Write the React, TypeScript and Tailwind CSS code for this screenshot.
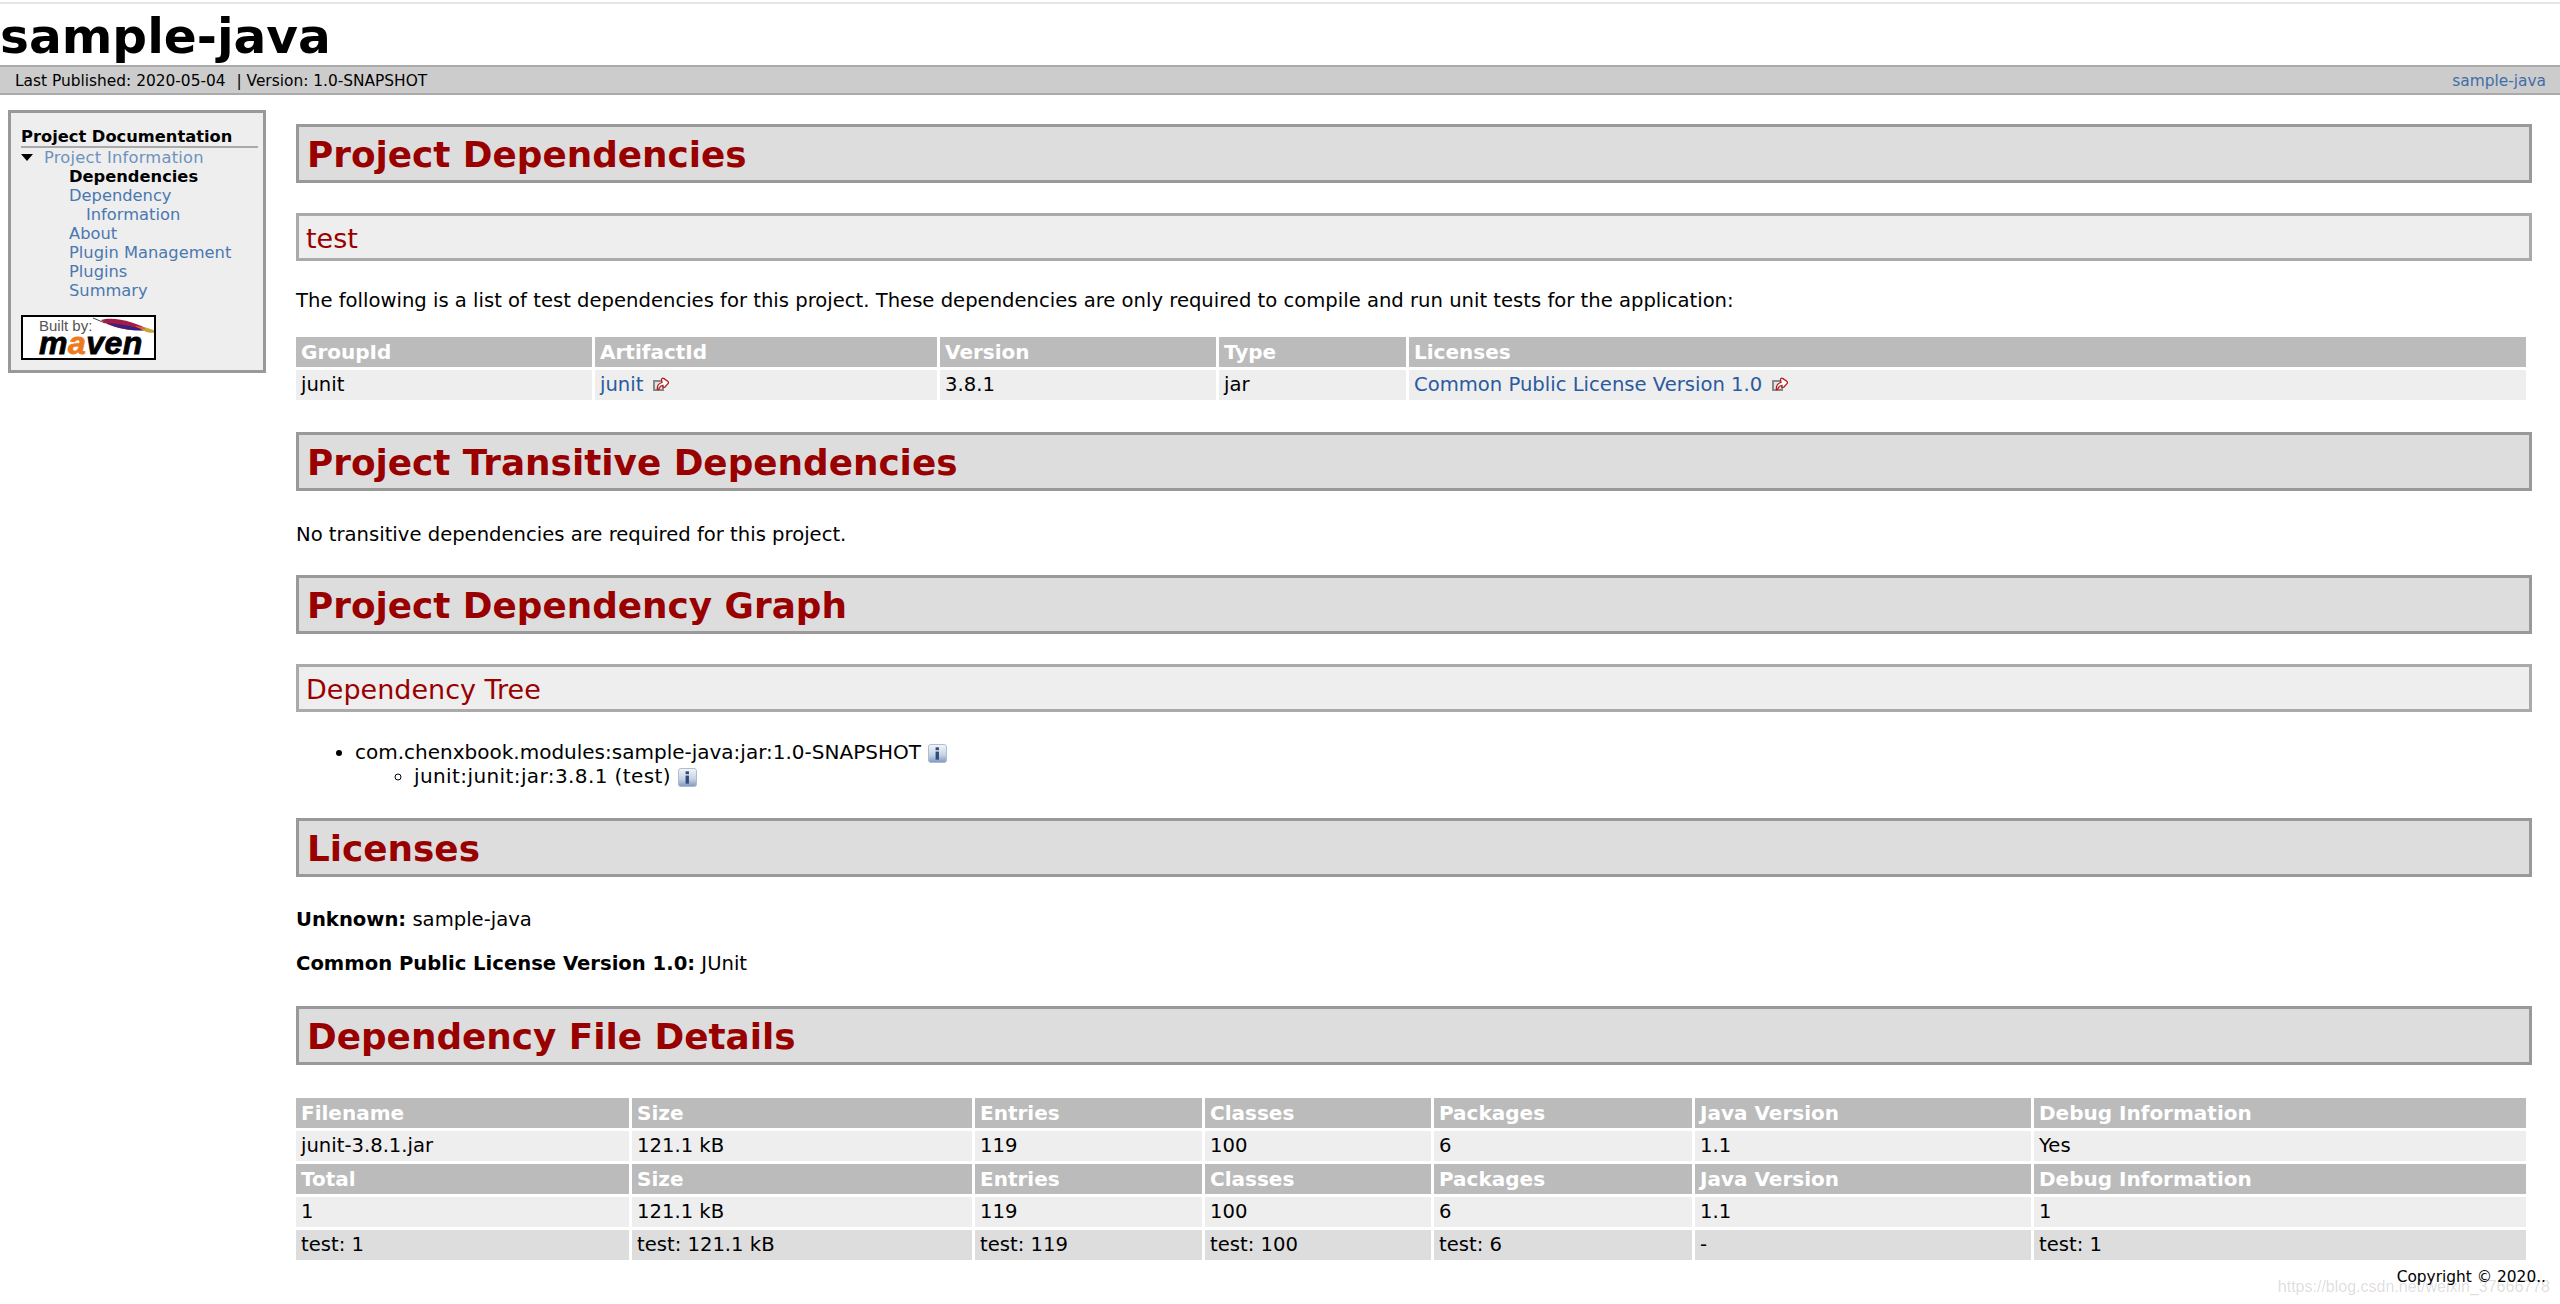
import type { ReactNode } from "react";

const sans = "font-['DejaVu_Sans','Liberation_Sans',sans-serif]";

function ExternalIcon() {
  return (
    <svg width="16" height="14" viewBox="0 0 16 14" className="ml-[10px] inline-block align-[0px]">
      <rect x="1" y="4" width="9" height="9" fill="#e4e4e4" stroke="#888" strokeWidth="2" />
      <path d="M4.5 12.5 C4 9 5.5 6.5 9 5.5 L8.5 2.5 C8.5 1.2 10 1 11 1.6 L15 4.5 C15.6 5 15.6 6 15 6.6 L12 10 C11 10.8 10 10.4 10 9.4 L10 8.4 C8 8.6 6.5 10 5.5 12.5 Z" fill="#fff" stroke="#b41c1c" strokeWidth="1.3" />
    </svg>
  );
}

function InfoIcon() {
  return (
    <svg width="19" height="19" viewBox="0 0 20 20" className="ml-[7px] inline-block align-[-4px]">
      <defs>
        <linearGradient id="info-bg" x1="0" y1="0" x2="0" y2="1">
          <stop offset="0" stopColor="#f4f6fa" />
          <stop offset="0.6" stopColor="#c5d1e3" />
          <stop offset="1" stopColor="#7d98bf" />
        </linearGradient>
      </defs>
      <rect x="0.5" y="0.5" width="19" height="19" rx="2.5" fill="url(#info-bg)" stroke="#a9b9d0" />
      <rect x="8" y="3.5" width="3.5" height="3" fill="#2d4a7c" />
      <rect x="8" y="8" width="3.5" height="8.5" fill="#2d4a7c" />
    </svg>
  );
}

function MavenBadge() {
  return (
    <div className="relative mt-[15px] h-[45px] w-[135px] overflow-hidden border-2 border-black bg-white">
      <span className="absolute left-[16px] top-[0px] font-['Liberation_Sans',sans-serif] text-[15px] leading-[18px] text-[#555]">
        Built by:
      </span>
      <svg width="66" height="20" viewBox="0 0 66 20" className="absolute left-[70px] top-[0px]">
        <path d="M0 1 L12 6" stroke="#444" strokeWidth="1" />
        <path d="M8 3 C22 -1 44 6 56 13 C40 14 18 12 8 3 Z" fill="#a01a4a" />
        <path d="M14 6 C28 7 42 10 54 13 C42 15 26 12 14 6 Z" fill="#3b1f7a" />
        <path d="M46 10 C52 10 60 12 64 15 C58 17 50 15 46 10 Z" fill="#c9a63a" />
        <path d="M42 9 C46 9 50 10 53 12 C49 13 45 11 42 9 Z" fill="#e0622a" />
      </svg>
      <span className="absolute left-[16px] top-[13px] font-['Liberation_Sans',sans-serif] text-[32px] font-bold italic leading-[26px] tracking-[0.5px] text-black [-webkit-text-stroke-width:0.8px]">
        m<span className="text-[#ee7a1e]">a</span>ven
      </span>
    </div>
  );
}

function Sidebar() {
  const item = "block pl-[48px] text-[#4a78b0]";
  return (
    <aside className="ml-[8px] mt-[15px] h-[263px] w-[258px] shrink-0 border-[3px] border-[#999] bg-[#eee] pl-[10px] pr-[5px] pt-[14px] text-[16.3px] leading-[19px]">
      <h5 className="border-b-2 border-[#aaa] pb-0 text-[16.3px] font-bold leading-[19px] text-black">Project Documentation</h5>
      <div className="relative pl-[23px] tracking-[0.25px] text-[#6d93bd]">
        <span className="absolute left-0 top-[6px] h-0 w-0 border-x-[6px] border-t-[7px] border-x-transparent border-t-black" />
        Project Information
      </div>
      <b className="block pl-[48px] text-black">Dependencies</b>
      <a className={item}>Dependency</a>
      <a className="block pl-[65px] text-[#4a78b0]">Information</a>
      <a className={item}>About</a>
      <a className={item}>Plugin Management</a>
      <a className={item}>Plugins</a>
      <a className={item}>Summary</a>
      <MavenBadge />
    </aside>
  );
}

function H2({ children, className }: { children: ReactNode; className: string }) {
  return (
    <h2 className={`h-[59px] border-[3px] border-[#999] bg-[#ddd] pl-[8px] text-[35.8px] font-bold leading-[55px] text-[#900] ${className}`}>
      {children}
    </h2>
  );
}

function H3({ children, className }: { children: ReactNode; className: string }) {
  return (
    <h3 className={`h-[48px] border-[3px] border-[#aaa] bg-[#eee] pl-[7px] text-[27px] leading-[45px] text-[#900] ${className}`}>
      {children}
    </h3>
  );
}

const th = "h-[30px] bg-[#bbb] px-[5px] text-left align-middle text-[20px] font-bold leading-[30px] text-white";
const td = "h-[30px] px-[5px] text-left align-middle text-[19.6px] font-normal leading-[30px] text-black";
const light = `${td} bg-[#eee]`;
const dark = `${td} bg-[#ddd]`;

function DependencyTable() {
  return (
    <table className="-ml-[3px] mt-[21px] table-fixed border-separate border-spacing-[3px]">
      <thead>
        <tr>
          <th className={`${th} w-[296px]`}>GroupId</th>
          <th className={`${th} w-[342px]`}>ArtifactId</th>
          <th className={`${th} w-[276px]`}>Version</th>
          <th className={`${th} w-[187px]`}>Type</th>
          <th className={`${th} w-[1117px]`}>Licenses</th>
        </tr>
      </thead>
      <tbody>
        <tr>
          <td className={light}>junit</td>
          <td className={light}>
            <a className="text-[#2a5aa0]">junit</a>
            <ExternalIcon />
          </td>
          <td className={light}>3.8.1</td>
          <td className={light}>jar</td>
          <td className={light}>
            <a className="text-[#2a5aa0]">Common Public License Version 1.0</a>
            <ExternalIcon />
          </td>
        </tr>
      </tbody>
    </table>
  );
}

function HeaderRow({ first }: { first: string }) {
  return (
    <tr>
      {[first, "Size", "Entries", "Classes", "Packages", "Java Version", "Debug Information"].map((label) => (
        <th key={label} className={th}>
          {label}
        </th>
      ))}
    </tr>
  );
}

function FileRow({ cells, cell }: { cells: string[]; cell: string }) {
  return (
    <tr>
      {cells.map((value, i) => (
        <td key={i} className={cell}>
          {value}
        </td>
      ))}
    </tr>
  );
}

function FileTable() {
  return (
    <table className="-ml-[3px] mt-[30px] table-fixed border-separate border-spacing-[3px]">
      <colgroup>
        <col className="w-[333px]" />
        <col className="w-[340px]" />
        <col className="w-[227px]" />
        <col className="w-[226px]" />
        <col className="w-[258px]" />
        <col className="w-[336px]" />
        <col className="w-[492px]" />
      </colgroup>
      <tbody>
        <HeaderRow first="Filename" />
        <FileRow cell={light} cells={["junit-3.8.1.jar", "121.1 kB", "119", "100", "6", "1.1", "Yes"]} />
        <HeaderRow first="Total" />
        <FileRow cell={light} cells={["1", "121.1 kB", "119", "100", "6", "1.1", "1"]} />
        <FileRow cell={dark} cells={["test: 1", "test: 121.1 kB", "test: 119", "test: 100", "test: 6", "-", "test: 1"]} />
      </tbody>
    </table>
  );
}

export default function App() {
  return (
    <div className={`relative h-[1304px] overflow-hidden bg-white ${sans} text-[19.6px] leading-[24px] text-black`}>
      <div className="h-[4px] border-b-2 border-[#e5e5e5]" />
      <h1 className="h-[61px] text-[48.6px] font-bold leading-[64px]">sample-java</h1>
      <div className="flex h-[30px] items-center justify-between border-y-2 border-[#aaa] bg-[#ccc] pl-[15px] pr-[14px] pt-[1px] text-[15.4px] leading-[24px]">
        <span>
          Last Published: 2020-05-04 <span className="ml-[6px]">| Version: 1.0-SNAPSHOT</span>
        </span>
        <a className="text-[#3f6ea8]">sample-java</a>
      </div>
      <div className="flex">
        <Sidebar />
        <main className="ml-[30px] w-[2236px] pt-[29px]">
          <H2 className="">Project Dependencies</H2>
          <H3 className="mt-[30px]">test</H3>
          <p className="mt-[28px]">The following is a list of test dependencies for this project. These dependencies are only required to compile and run unit tests for the application:</p>
          <DependencyTable />
          <H2 className="mt-[29px]">Project Transitive Dependencies</H2>
          <p className="mt-[32px]">No transitive dependencies are required for this project.</p>
          <H2 className="mt-[28px]">Project Dependency Graph</H2>
          <H3 className="mt-[30px]">Dependency Tree</H3>
          <ul className="ml-[39px] mt-[28px] list-disc pl-[20px] text-[20px]">
            <li>
              com.chenxbook.modules:sample-java:jar:1.0-SNAPSHOT
              <InfoIcon />
              <ul className="ml-[59px] list-[circle] tracking-[0.4px]">
                <li>
                  junit:junit:jar:3.8.1 (test)
                  <InfoIcon />
                </li>
              </ul>
            </li>
          </ul>
          <H2 className="mt-[30px]">Licenses</H2>
          <p className="mt-[31px]">
            <b>Unknown:</b> sample-java
          </p>
          <p className="mt-[20px]">
            <b>Common Public License Version 1.0:</b> JUnit
          </p>
          <H2 className="mt-[30px]">Dependency File Details</H2>
          <FileTable />
        </main>
      </div>
      <div className="absolute right-[14px] top-[1267px] text-[15.4px] leading-[20px]">Copyright © 2020..</div>
      <div className="absolute right-[10px] top-[1277px] font-['Liberation_Sans',sans-serif] text-[16px] leading-[20px] text-black/15">
        https://blog.csdn.net/weixin_37666778
      </div>
    </div>
  );
}
